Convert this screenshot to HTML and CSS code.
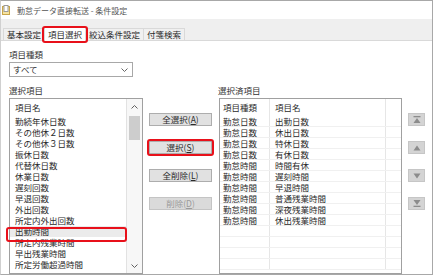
FILE: index.html
```html
<!doctype html>
<html lang="ja">
  <head>
    <meta charset="UTF-8" />
    <title>勤怠データ直接転送 - 条件設定</title>
    <link rel="stylesheet" href="styles.css">
  </head>
  <body>
    <div class="window">
      <div class="titlebar">
        <svg class="app-icon" width="8" height="10" viewBox="0 0 8 10">
          <rect x="0.5" y="1.5" width="7" height="8" fill="#f6e3a1" stroke="#c9a64a" />
          <rect x="2" y="0.5" width="4" height="6" fill="#fff" stroke="#9a9a9a" />
        </svg>
        <span>勤怠データ直接転送 - 条件設定</span>
      </div>

      <div class="tabs">
        <div class="tab">基本設定</div>
        <div class="tab active">項目選択</div>
        <div class="tab">絞込条件設定</div>
        <div class="tab">付箋検索</div>
      </div>

      <div class="page">
        <!-- source side -->
        <div class="col-left">
          <div class="label">項目種類</div>
          <div class="select">
            <span>すべて</span>
            <svg width="7" height="4" viewBox="0 0 7 4">
              <polyline points="0.5,0.5 3.5,3.5 6.5,0.5" fill="none" stroke="#666" />
            </svg>
          </div>
          <div class="label gap">選択項目</div>
          <div class="listbox">
            <div class="list-body">
              <div class="list-head">項目名</div>
              <div class="row">勤続年休日数</div>
              <div class="row">その他休２日数</div>
              <div class="row">その他休３日数</div>
              <div class="row">振休日数</div>
              <div class="row">代替休日数</div>
              <div class="row">休業日数</div>
              <div class="row">遅刻回数</div>
              <div class="row">早退回数</div>
              <div class="row">外出回数</div>
              <div class="row">所定内外出回数</div>
              <div class="row selected">出勤時間</div>
              <div class="row">所定内残業時間</div>
              <div class="row">早出残業時間</div>
              <div class="row">所定労働超過時間</div>
            </div>
            <div class="scrollbar">
              <div class="sb-btn">
                <svg width="7" height="4" viewBox="0 0 7 4">
                  <polyline points="0.5,3.5 3.5,0.5 6.5,3.5" fill="none" stroke="#606060" />
                </svg>
              </div>
              <div class="sb-track"><div class="sb-thumb"></div></div>
              <div class="sb-btn">
                <svg width="7" height="4" viewBox="0 0 7 4">
                  <polyline points="0.5,0.5 3.5,3.5 6.5,0.5" fill="none" stroke="#606060" />
                </svg>
              </div>
            </div>
          </div>
        </div>

        <!-- move buttons -->
        <div class="col-mid">
          <div class="btn">全選択(<u>A</u>)</div>
          <div class="btn marked">選択(<u>S</u>)</div>
          <div class="btn">全削除(<u>L</u>)</div>
          <div class="btn disabled">削除(<u>D</u>)</div>
        </div>

        <!-- selected side -->
        <div class="col-right">
          <div class="label">選択済項目</div>
          <div class="grid">
            <div class="grid-row head"><span>項目種類</span><span>項目名</span><span></span></div>
            <div class="grid-row"><span>勤怠日数</span><span>出勤日数</span><span></span></div>
            <div class="grid-row"><span>勤怠日数</span><span>休出日数</span><span></span></div>
            <div class="grid-row"><span>勤怠日数</span><span>特休日数</span><span></span></div>
            <div class="grid-row"><span>勤怠日数</span><span>有休日数</span><span></span></div>
            <div class="grid-row"><span>勤怠時間</span><span>時間有休</span><span></span></div>
            <div class="grid-row"><span>勤怠時間</span><span>遅刻時間</span><span></span></div>
            <div class="grid-row"><span>勤怠時間</span><span>早退時間</span><span></span></div>
            <div class="grid-row"><span>勤怠時間</span><span>普通残業時間</span><span></span></div>
            <div class="grid-row"><span>勤怠時間</span><span>深夜残業時間</span><span></span></div>
            <div class="grid-row"><span>勤怠時間</span><span>休出残業時間</span><span></span></div>
            <div class="grid-row"><span></span><span></span><span></span></div>
            <div class="grid-row"><span></span><span></span><span></span></div>
            <div class="grid-row"><span></span><span></span><span></span></div>
            <div class="grid-row"><span></span><span></span><span></span></div>
          </div>
        </div>

        <!-- order buttons -->
        <div class="col-order">
          <div class="order-btn">
            <svg width="8" height="7" viewBox="0 0 8 7">
              <rect x="0.5" y="0" width="7" height="1.3" />
              <polygon points="4,2 7.5,7 0.5,7" />
            </svg>
          </div>
          <div class="order-btn">
            <svg width="8" height="6" viewBox="0 0 8 6">
              <polygon points="4,0.5 7.5,5.5 0.5,5.5" />
            </svg>
          </div>
          <div class="order-btn">
            <svg width="8" height="6" viewBox="0 0 8 6">
              <polygon points="0.5,0.5 7.5,0.5 4,5.5" />
            </svg>
          </div>
          <div class="order-btn">
            <svg width="8" height="7" viewBox="0 0 8 7">
              <polygon points="0.5,0 7.5,0 4,5" />
              <rect x="0.5" y="5.7" width="7" height="1.3" />
            </svg>
          </div>
        </div>
      </div>
    </div>
  </body>
</html>
```

FILE: styles.css
```css
* {
  box-sizing: border-box;
}

body {
  margin: 0;
  font-family: "Noto Sans CJK JP", "Noto Sans", sans-serif;
  font-size: 8.5px;
  color: #2a2a2a;
  background: #fff;
}

.window {
  width: 433px;
  height: 275px;
  border: 1px solid #a8a8a8;
  border-left-color: #d0d0d0;
  overflow: hidden;
  display: flex;
  flex-direction: column;
}

.titlebar {
  height: 18px;
  display: flex;
  align-items: center;
  gap: 7px;
  padding-left: 1px;
  font-size: 8px;
  color: #555;
}

.tabs {
  height: 22px;
  background: #efefef;
  border-bottom: 1px solid #d9d9d9;
  display: flex;
  align-items: flex-end;
  padding-left: 2px;
}

.tab {
  height: 12px;
  line-height: 11px;
  padding: 0 3px;
  margin-right: -1px;
  border: 1px solid #d9d9d9;
  border-bottom: none;
  background: #f0f0f0;
}

.tab.active {
  position: relative;
  z-index: 1;
  height: 15px;
  margin-bottom: -1px;
  padding-top: 2px;
  background: #fff;
}

.tab.active::after {
  content: "";
  position: absolute;
  top: -1px;
  left: -3px;
  right: -3px;
  bottom: -2px;
  border: 2px solid #e8101a;
  border-radius: 3px;
}

.page {
  flex: 1;
  min-height: 0;
  display: flex;
  padding-left: 8px;
}

.label {
  height: 11px;
  line-height: 11px;
  color: #333;
}

.col-left {
  width: 134px;
  display: flex;
  flex-direction: column;
  padding-top: 8px;
}

.select {
  width: 124px;
  height: 15px;
  margin-top: 2px;
  padding: 0 4px 0 3px;
  border: 1px solid #a8a8a8;
  display: flex;
  align-items: center;
  justify-content: space-between;
  line-height: 11px;
}

.label.gap {
  margin-top: 8px;
}

.listbox {
  flex: 1;
  margin-top: 2px;
  border: 1px solid #a0a0a0;
  display: flex;
}

.list-body {
  flex: 1;
  border-right: 1px solid #e2e2e2;
}

.list-head {
  height: 17px;
  line-height: 17px;
  padding-left: 5px;
}

.row {
  height: 11px;
  line-height: 11px;
  padding-left: 5px;
  white-space: nowrap;
}

.row.selected {
  position: relative;
  background: #ebebeb;
}

.row.selected::after {
  content: "";
  position: absolute;
  top: 1px;
  bottom: -5px;
  left: -4px;
  right: -1px;
  border: 2px solid #e8101a;
  border-radius: 3px;
}

.scrollbar {
  width: 15px;
  background: #f7f7f7;
  display: flex;
  flex-direction: column;
}

.sb-btn {
  height: 15px;
  display: flex;
  align-items: center;
  justify-content: center;
}

.sb-track {
  flex: 1;
  padding: 2px 2px 0;
}

.sb-thumb {
  height: 24px;
  background: #cdcdcd;
}

.col-mid {
  width: 76px;
  padding: 72px 0 0 6px;
  display: flex;
  flex-direction: column;
  gap: 15px;
}

.btn {
  position: relative;
  width: 63px;
  height: 13px;
  line-height: 11px;
  text-align: center;
  background: #e1e1e1;
  border: 1px solid #adadad;
}

.btn.marked::after {
  content: "";
  position: absolute;
  top: -3px;
  left: -3px;
  right: -3px;
  bottom: -3px;
  border: 2px solid #e8101a;
  border-radius: 3px;
}

.btn.disabled {
  background: #dadada;
  border-color: #c4c4c4;
  color: #9a9a9a;
}

.col-right {
  width: 183px;
  display: flex;
  flex-direction: column;
  padding-top: 44px;
}

.col-right .label {
  margin-left: -1px;
}

.grid {
  flex: 1;
  margin-top: 2px;
  border: 1px solid #a0a0a0;
}

.grid-row {
  display: grid;
  grid-template-columns: 50px 116px 1fr;
  height: 11px;
  line-height: 10px;
  border-bottom: 1px solid #f0f0f0;
}

.grid-row.head {
  height: 17px;
  line-height: 17px;
  border-bottom: none;
}

.grid-row span {
  border-right: 1px solid #e6e6e6;
  white-space: nowrap;
}

.grid-row span:first-child {
  padding-left: 3px;
}

.grid-row span:nth-child(2) {
  padding-left: 5px;
}

.grid-row span:last-child {
  border-right: none;
}

.col-order {
  flex: 1;
  padding: 72px 0 0 6px;
  display: flex;
  flex-direction: column;
  gap: 15px;
}

.order-btn {
  width: 17px;
  height: 13px;
  background: #d4d4d4;
  border: 1px solid #c6c6c6;
  display: flex;
  align-items: center;
  justify-content: center;
  fill: #8c8c8c;
}
```
